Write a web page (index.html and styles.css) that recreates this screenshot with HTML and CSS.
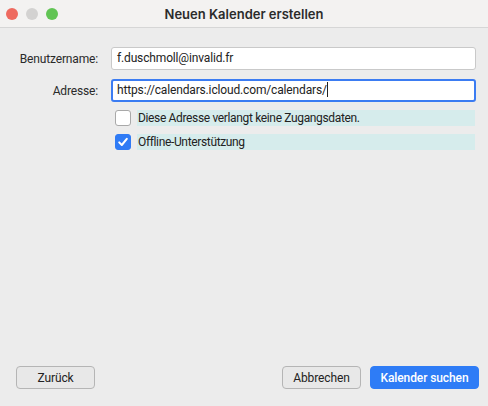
FILE: index.html
```html
<!DOCTYPE html>
<html lang="de">
<head>
  <meta charset="UTF-8" />
  <meta name="viewport" content="width=device-width, initial-scale=1.0" />
  <title>Neuen Kalender erstellen</title>
  <link rel="stylesheet" href="styles.css">
</head>
<body>
  <div class="window">
    <div class="titlebar">
      <div class="lights">
        <span class="light red"></span>
        <span class="light grey"></span>
        <span class="light green"></span>
      </div>
      <h1>Neuen Kalender erstellen</h1>
    </div>

    <div class="form">
      <label class="label">Benutzername:</label>
      <div class="field">f.duschmoll@invalid.fr</div>

      <label class="label">Adresse:</label>
      <div class="field focused">https://calendars.icloud.com/calendars/<span class="caret"></span></div>

      <div></div>
      <div class="checks">
        <div class="check">
          <span class="box"></span>
          <span class="check-text">Diese Adresse verlangt keine Zugangsdaten.</span>
        </div>
        <div class="check">
          <span class="box checked">
            <svg width="12" height="12" viewBox="0 0 12 12"><path d="M2.2 6.4 L4.8 9 L9.8 2.8" fill="none" stroke="#fff" stroke-width="2" stroke-linecap="round" stroke-linejoin="round"/></svg>
          </span>
          <span class="check-text">Offline-Unterstützung</span>
        </div>
      </div>
    </div>

    <div class="buttons">
      <button class="btn">Zurück</button>
      <div class="spacer"></div>
      <button class="btn">Abbrechen</button>
      <button class="btn primary">Kalender suchen</button>
    </div>
  </div>
</body>
</html>
```

FILE: styles.css
```css
body {
  margin: 0;
  font-family: 'Roboto', 'Liberation Sans', sans-serif;
  font-size: 12px;
  letter-spacing: -0.15px;
  color: #222;
  background: #ececec;
}

.window {
  display: flex;
  flex-direction: column;
  height: 406px;
  background: #ececec;
}

.titlebar {
  position: relative;
  height: 27px;
  background: #f3f2f1;
  border-bottom: 1px solid #d6d6d6;
  display: flex;
  align-items: center;
  justify-content: center;
}

.titlebar h1 {
  margin: 0;
  font-family: 'Inter', sans-serif;
  font-size: 13px;
  font-weight: 600;
  letter-spacing: 0;
  color: #2b2b2b;
}

.lights {
  position: absolute;
  left: 6px;
  top: 8px;
  display: flex;
  gap: 8px;
}

.light {
  width: 12px;
  height: 12px;
  border-radius: 50%;
}

.red { background: #ee6a5f; }
.grey { background: #d3d2d1; }
.green { background: #61c454; }

.form {
  display: grid;
  grid-template-columns: 98px 365px;
  column-gap: 13px;
  row-gap: 9px;
  padding-top: 19px;
  align-items: center;
}

.label {
  text-align: right;
  color: #2a2a2a;
}

.field {
  box-sizing: border-box;
  height: 23px;
  line-height: 21px;
  padding: 0 5px;
  background: #fff;
  border: 1px solid #c9c9c9;
  border-radius: 3px;
  white-space: nowrap;
  overflow: hidden;
}

.field.focused {
  border: 2px solid #3b7cf2;
  line-height: 19px;
  padding: 0 4px;
}

.caret {
  display: inline-block;
  width: 1px;
  height: 15px;
  background: #222;
  vertical-align: -3px;
}

.checks {
  display: flex;
  flex-direction: column;
  gap: 8px;
  padding-left: 4px;
  margin-top: -1px;
}

.check {
  display: flex;
  align-items: center;
  gap: 6px;
}

.box {
  box-sizing: border-box;
  width: 16px;
  height: 16px;
  border: 1px solid #a9a9a9;
  border-radius: 3px;
  background: #fff;
  display: flex;
  align-items: center;
  justify-content: center;
}

.box.checked {
  background: #2f7bf5;
  border-color: #2f7bf5;
}

.check-text {
  flex: 1;
  height: 16px;
  line-height: 16px;
  padding-left: 1px;
  letter-spacing: -0.35px;
  background: #d6ecec;
  margin-right: 1px;
}

.buttons {
  margin-top: auto;
  display: flex;
  gap: 9px;
  padding: 0 9px 17px 16px;
}

.spacer {
  flex: 1;
}

.btn {
  box-sizing: border-box;
  height: 23px;
  font-family: inherit;
  font-size: 12px;
  letter-spacing: -0.1px;
  color: #222;
  background: #e8e8e8;
  border: 1px solid #b5b5b5;
  border-radius: 4px;
  width: 79px;
  padding: 0;
}

.btn.primary {
  width: 109px;
  background: #2e7cf6;
  border-color: #2e7cf6;
  color: #fff;
  font-weight: 500;
}
```
